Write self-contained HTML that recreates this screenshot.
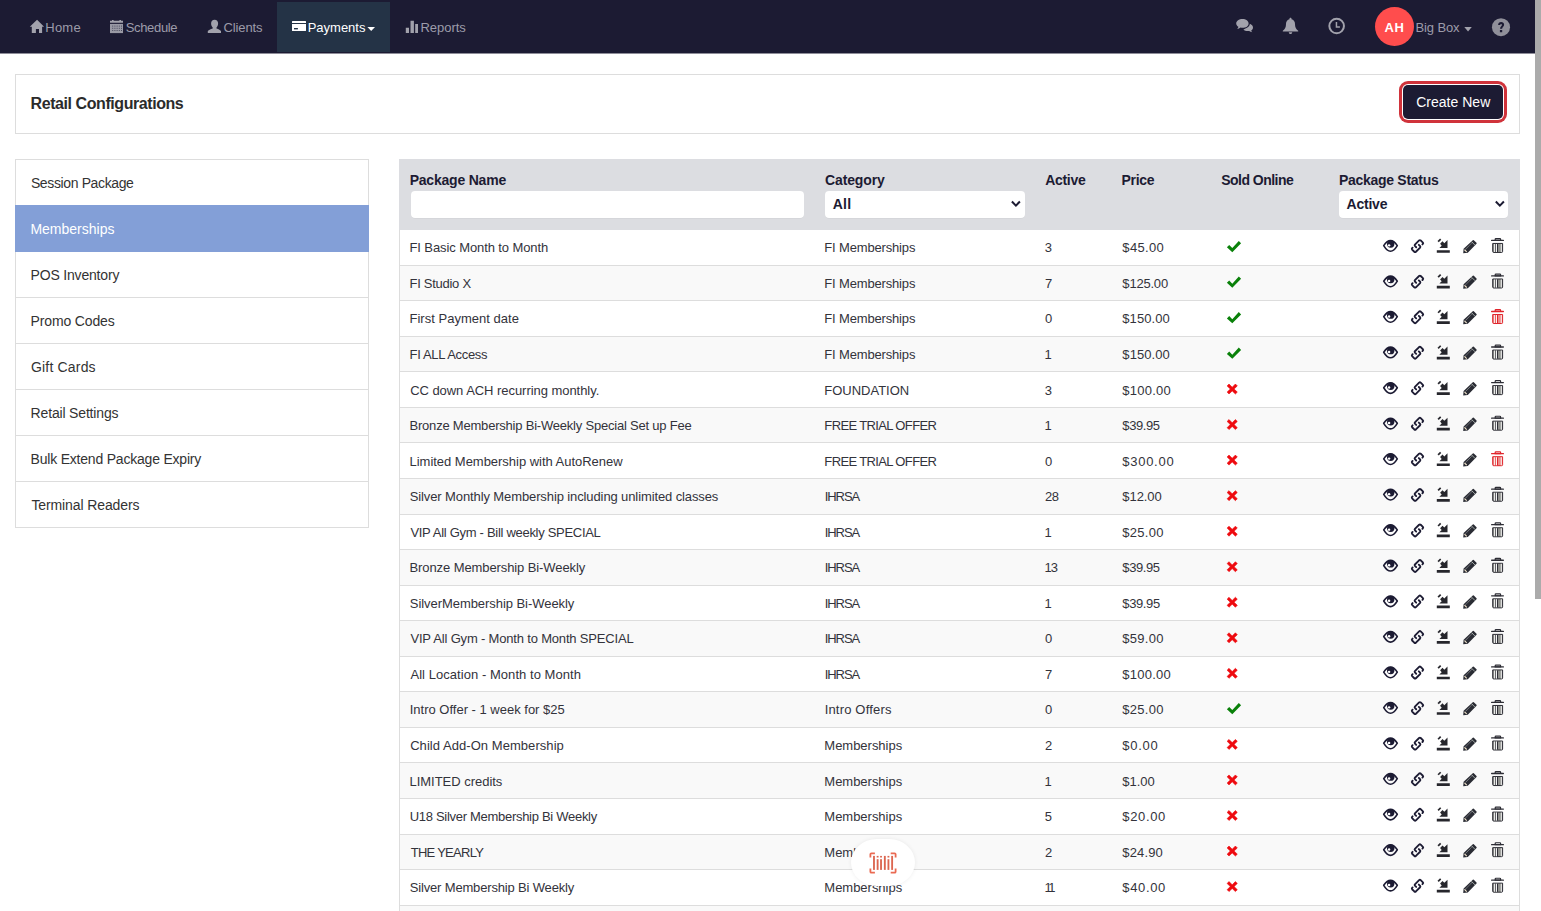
<!DOCTYPE html>
<html><head><meta charset="utf-8"><title>Retail Configurations</title>
<style>
*{box-sizing:border-box;margin:0;padding:0}
html,body{width:1541px;height:911px;overflow:hidden;background:#fff}
body{font-family:"Liberation Sans",sans-serif;font-size:13px;color:#333;position:relative}
.abs{position:absolute}
#nav{position:absolute;left:0;top:0;width:1535px;height:53px;background:#1c1b33;border-bottom:1px solid #1c1b33}
#nav2{position:absolute;left:0;top:53px;width:1535px;height:1px;background:#8e8d99}
#act{position:absolute;left:277px;top:2px;width:113px;height:50px;background:#243346}
#av{position:absolute;left:1375px;top:7px;width:39px;height:39px;border-radius:20px;background:#ff4d4d}
.t{position:absolute;height:16px;line-height:16px;white-space:nowrap}
#panel{position:absolute;left:15px;top:74px;width:1505px;height:60px;border:1px solid #ddd;background:#fff}
#cbo{position:absolute;left:1399px;top:81px;width:108px;height:42px;border-radius:9px;background:#d0333b}
#cbw{position:absolute;left:1402px;top:84px;width:102px;height:36px;border-radius:6px;background:#fff}
#cbi{position:absolute;left:1403px;top:85px;width:100px;height:34px;border-radius:5px;background:#1c1b33}
#side{position:absolute;left:15px;top:159px;width:354px;height:369px;border:1px solid #ddd;background:#fff}
.si{position:absolute;left:0;width:352px;height:46px;border-bottom:1px solid #ddd}
.si.on{background:#839fd7;border-bottom-color:#839fd7;margin-top:-1px;height:47px;left:-1px;width:354px}
#thead{position:absolute;left:399px;top:159px;width:1121px;height:71px;background:#dcdde1}
.inp{position:absolute;background:#fff;border-radius:4px;height:27px;top:191px;box-shadow:0 0.5px 0 rgba(0,0,0,0.06)}
.row{position:absolute;left:399px;width:1121px;background:#fff;border-bottom:1px solid #ddd;border-left:1px solid #ddd;border-right:1px solid #ddd}
.row.alt{background:#f9f9f9}
#ov{position:absolute;left:0;top:0;width:1541px;height:911px}
#sb{position:absolute;left:1535px;top:0;width:6px;height:911px;background:#fff}
#sb i{position:absolute;left:0;top:0;width:6px;height:599px;background:#ababab}
#fab{position:absolute;left:851px;top:839px;width:63.6px;height:47.4px;border-radius:26px / 23.7px;background:#fff;box-shadow:0 0 4px rgba(0,0,0,0.07)}

</style></head>
<body>
<div id="nav"></div><div id="nav2"></div>
<div id="act"></div>
<div id="av"></div>
<div id="panel"></div>
<div id="cbo"></div><div id="cbw"></div><div id="cbi"></div>
<div id="side">
<div class="si" style="top:0"></div>
<div class="si on" style="top:46px"></div>
<div class="si" style="top:92px"></div>
<div class="si" style="top:138px"></div>
<div class="si" style="top:184px"></div>
<div class="si" style="top:230px"></div>
<div class="si" style="top:276px"></div>
</div>
<div id="thead"></div>
<div class="inp" style="left:411px;width:393px"></div>
<div class="inp" style="left:825px;width:200px"></div>
<div class="inp" style="left:1339px;width:169px"></div>
<div id="tbl">
<div class="row" style="top:230px;height:36px"></div>
<div class="row alt" style="top:266px;height:35px"></div>
<div class="row" style="top:301px;height:36px"></div>
<div class="row alt" style="top:337px;height:35px"></div>
<div class="row" style="top:372px;height:36px"></div>
<div class="row alt" style="top:408px;height:35px"></div>
<div class="row" style="top:443px;height:36px"></div>
<div class="row alt" style="top:479px;height:36px"></div>
<div class="row" style="top:515px;height:35px"></div>
<div class="row alt" style="top:550px;height:36px"></div>
<div class="row" style="top:586px;height:35px"></div>
<div class="row alt" style="top:621px;height:36px"></div>
<div class="row" style="top:657px;height:35px"></div>
<div class="row alt" style="top:692px;height:36px"></div>
<div class="row" style="top:728px;height:35px"></div>
<div class="row alt" style="top:763px;height:36px"></div>
<div class="row" style="top:799px;height:36px"></div>
<div class="row alt" style="top:835px;height:35px"></div>
<div class="row" style="top:870px;height:36px"></div>
<div class="row alt" style="top:906px;height:36px"></div>
</div>
<span class="t" id="n1" style="left:45.37px;top:20px;font-size:13px;color:#9c9caa;letter-spacing:0.195px;">Home</span>
<span class="t" id="n2" style="left:125.65px;top:20px;font-size:13px;color:#9c9caa;letter-spacing:-0.322px;">Schedule</span>
<span class="t" id="n3" style="left:223.38px;top:20px;font-size:13px;color:#9c9caa;letter-spacing:-0.093px;">Clients</span>
<span class="t" id="n4" style="left:307.70px;top:20px;font-size:13px;color:#fff;letter-spacing:-0.008px;">Payments</span>
<span class="t" id="n5" style="left:420.53px;top:20px;font-size:13px;color:#9c9caa;letter-spacing:-0.029px;">Reports</span>
<span class="t" id="n6" style="left:1384.38px;top:20px;font-size:13px;color:#fff;font-weight:700;letter-spacing:0.619px;">AH</span>
<span class="t" id="n7" style="left:1415.55px;top:20px;font-size:13px;color:#9c9caa;letter-spacing:-0.123px;">Big Box</span>
<span class="t" id="title" style="left:30.59px;top:96px;font-size:16px;color:#2b2b2b;font-weight:700;letter-spacing:-0.430px;">Retail Configurations</span>
<span class="t" id="cbt" style="left:1416.13px;top:94px;font-size:14px;color:#fff;letter-spacing:0.022px;">Create New</span>
<span class="t" id="s0" style="left:30.91px;top:175px;font-size:14px;color:#333;letter-spacing:-0.372px;">Session Package</span>
<span class="t" id="s1" style="left:30.38px;top:221px;font-size:14px;color:#fff;letter-spacing:0.004px;">Memberships</span>
<span class="t" id="s2" style="left:30.62px;top:267px;font-size:14px;color:#333;letter-spacing:-0.189px;">POS Inventory</span>
<span class="t" id="s3" style="left:30.62px;top:313px;font-size:14px;color:#333;letter-spacing:-0.151px;">Promo Codes</span>
<span class="t" id="s4" style="left:31.02px;top:359px;font-size:14px;color:#333;letter-spacing:0.175px;">Gift Cards</span>
<span class="t" id="s5" style="left:30.62px;top:405px;font-size:14px;color:#333;letter-spacing:-0.170px;">Retail Settings</span>
<span class="t" id="s6" style="left:30.62px;top:451px;font-size:14px;color:#333;letter-spacing:-0.210px;">Bulk Extend Package Expiry</span>
<span class="t" id="s7" style="left:31.43px;top:497px;font-size:14px;color:#333;letter-spacing:-0.111px;">Terminal Readers</span>
<span class="t" id="h0" style="left:409.65px;top:172px;font-size:14px;color:#1c1b33;font-weight:700;letter-spacing:-0.209px;">Package Name</span>
<span class="t" id="h1" style="left:825.10px;top:172px;font-size:14px;color:#1c1b33;font-weight:700;letter-spacing:-0.148px;">Category</span>
<span class="t" id="h2" style="left:1045.29px;top:172px;font-size:14px;color:#1c1b33;font-weight:700;letter-spacing:-0.325px;">Active</span>
<span class="t" id="h3" style="left:1121.55px;top:172px;font-size:14px;color:#1c1b33;font-weight:700;letter-spacing:-0.289px;">Price</span>
<span class="t" id="h4" style="left:1221.31px;top:172px;font-size:14px;color:#1c1b33;font-weight:700;letter-spacing:-0.535px;">Sold Online</span>
<span class="t" id="h5" style="left:1338.88px;top:172px;font-size:14px;color:#1c1b33;font-weight:700;letter-spacing:-0.281px;">Package Status</span>
<span class="t" id="sel1" style="left:832.87px;top:196px;font-size:14px;color:#1c1b33;font-weight:700;letter-spacing:0.149px;">All</span>
<span class="t" id="sel2" style="left:1346.54px;top:196px;font-size:14px;color:#1c1b33;font-weight:700;letter-spacing:-0.214px;">Active</span>
<span class="t" id="r0a" style="left:409.52px;top:240px;font-size:13px;color:#33333b;letter-spacing:-0.103px;">FI Basic Month to Month</span>
<span class="t" id="r0b" style="left:824.35px;top:240px;font-size:13px;color:#33333b;letter-spacing:-0.164px;">FI Memberships</span>
<span class="t" id="r0c" style="left:1044.67px;top:240px;font-size:13px;color:#33333b;">3</span>
<span class="t" id="r0d" style="left:1122.32px;top:240px;font-size:13px;color:#33333b;letter-spacing:0.342px;">$45.00</span>
<span class="t" id="r1a" style="left:409.52px;top:276px;font-size:13px;color:#33333b;letter-spacing:-0.275px;">FI Studio X</span>
<span class="t" id="r1b" style="left:824.35px;top:276px;font-size:13px;color:#33333b;letter-spacing:-0.165px;">FI Memberships</span>
<span class="t" id="r1c" style="left:1044.88px;top:276px;font-size:13px;color:#33333b;">7</span>
<span class="t" id="r1d" style="left:1122.37px;top:276px;font-size:13px;color:#33333b;letter-spacing:-0.206px;">$125.00</span>
<span class="t" id="r2a" style="left:409.52px;top:311px;font-size:13px;color:#33333b;letter-spacing:0.015px;">First Payment date</span>
<span class="t" id="r2b" style="left:824.35px;top:311px;font-size:13px;color:#33333b;letter-spacing:-0.164px;">FI Memberships</span>
<span class="t" id="r2c" style="left:1044.91px;top:311px;font-size:13px;color:#33333b;">0</span>
<span class="t" id="r2d" style="left:1122.32px;top:311px;font-size:13px;color:#33333b;letter-spacing:0.074px;">$150.00</span>
<span class="t" id="r3a" style="left:409.52px;top:347px;font-size:13px;color:#33333b;letter-spacing:-0.326px;">FI ALL Access</span>
<span class="t" id="r3b" style="left:824.35px;top:347px;font-size:13px;color:#33333b;letter-spacing:-0.165px;">FI Memberships</span>
<span class="t" id="r3c" style="left:1044.38px;top:347px;font-size:13px;color:#33333b;">1</span>
<span class="t" id="r3d" style="left:1122.37px;top:347px;font-size:13px;color:#33333b;letter-spacing:0.065px;">$150.00</span>
<span class="t" id="r4a" style="left:410.17px;top:383px;font-size:13px;color:#33333b;letter-spacing:-0.048px;">CC down ACH recurring monthly.</span>
<span class="t" id="r4b" style="left:824.35px;top:383px;font-size:13px;color:#33333b;letter-spacing:-0.023px;">FOUNDATION</span>
<span class="t" id="r4c" style="left:1044.67px;top:383px;font-size:13px;color:#33333b;">3</span>
<span class="t" id="r4d" style="left:1122.32px;top:383px;font-size:13px;color:#33333b;letter-spacing:0.244px;">$100.00</span>
<span class="t" id="r5a" style="left:409.52px;top:418px;font-size:13px;color:#33333b;letter-spacing:-0.209px;">Bronze Membership Bi-Weekly Special Set up Fee</span>
<span class="t" id="r5b" style="left:824.35px;top:418px;font-size:13px;color:#33333b;letter-spacing:-0.636px;">FREE TRIAL OFFER</span>
<span class="t" id="r5c" style="left:1044.38px;top:418px;font-size:13px;color:#33333b;">1</span>
<span class="t" id="r5d" style="left:1122.37px;top:418px;font-size:13px;color:#33333b;letter-spacing:-0.404px;">$39.95</span>
<span class="t" id="r6a" style="left:409.52px;top:454px;font-size:13px;color:#33333b;letter-spacing:-0.025px;">Limited Membership with AutoRenew</span>
<span class="t" id="r6b" style="left:824.35px;top:454px;font-size:13px;color:#33333b;letter-spacing:-0.636px;">FREE TRIAL OFFER</span>
<span class="t" id="r6c" style="left:1044.91px;top:454px;font-size:13px;color:#33333b;">0</span>
<span class="t" id="r6d" style="left:1122.32px;top:454px;font-size:13px;color:#33333b;letter-spacing:0.722px;">$300.00</span>
<span class="t" id="r7a" style="left:409.74px;top:489px;font-size:13px;color:#33333b;letter-spacing:-0.109px;">Silver Monthly Membership including unlimited classes</span>
<span class="t" id="r7b" style="left:824.65px;top:489px;font-size:13px;color:#33333b;letter-spacing:-1.034px;">IHRSA</span>
<span class="t" id="r7c" style="left:1044.88px;top:489px;font-size:13px;color:#33333b;letter-spacing:-0.469px;">28</span>
<span class="t" id="r7d" style="left:1122.37px;top:489px;font-size:13px;color:#33333b;letter-spacing:-0.096px;">$12.00</span>
<span class="t" id="r8a" style="left:410.42px;top:525px;font-size:13px;color:#33333b;letter-spacing:-0.295px;">VIP All Gym - Bill weekly SPECIAL</span>
<span class="t" id="r8b" style="left:824.66px;top:525px;font-size:13px;color:#33333b;letter-spacing:-1.035px;">IHRSA</span>
<span class="t" id="r8c" style="left:1044.43px;top:525px;font-size:13px;color:#33333b;">1</span>
<span class="t" id="r8d" style="left:1122.32px;top:525px;font-size:13px;color:#33333b;letter-spacing:0.287px;">$25.00</span>
<span class="t" id="r9a" style="left:409.52px;top:560px;font-size:13px;color:#33333b;letter-spacing:-0.095px;">Bronze Membership Bi-Weekly</span>
<span class="t" id="r9b" style="left:824.65px;top:560px;font-size:13px;color:#33333b;letter-spacing:-1.034px;">IHRSA</span>
<span class="t" id="r9c" style="left:1044.38px;top:560px;font-size:13px;color:#33333b;letter-spacing:-0.848px;">13</span>
<span class="t" id="r9d" style="left:1122.37px;top:560px;font-size:13px;color:#33333b;letter-spacing:-0.404px;">$39.95</span>
<span class="t" id="r10a" style="left:409.79px;top:596px;font-size:13px;color:#33333b;letter-spacing:-0.054px;">SilverMembership Bi-Weekly</span>
<span class="t" id="r10b" style="left:824.66px;top:596px;font-size:13px;color:#33333b;letter-spacing:-1.035px;">IHRSA</span>
<span class="t" id="r10c" style="left:1044.43px;top:596px;font-size:13px;color:#33333b;">1</span>
<span class="t" id="r10d" style="left:1122.32px;top:596px;font-size:13px;color:#33333b;letter-spacing:-0.392px;">$39.95</span>
<span class="t" id="r11a" style="left:410.42px;top:631px;font-size:13px;color:#33333b;letter-spacing:-0.180px;">VIP All Gym - Month to Month SPECIAL</span>
<span class="t" id="r11b" style="left:824.65px;top:631px;font-size:13px;color:#33333b;letter-spacing:-1.034px;">IHRSA</span>
<span class="t" id="r11c" style="left:1044.91px;top:631px;font-size:13px;color:#33333b;">0</span>
<span class="t" id="r11d" style="left:1122.37px;top:631px;font-size:13px;color:#33333b;letter-spacing:0.275px;">$59.00</span>
<span class="t" id="r12a" style="left:410.43px;top:667px;font-size:13px;color:#33333b;letter-spacing:0.051px;">All Location - Month to Month</span>
<span class="t" id="r12b" style="left:824.66px;top:667px;font-size:13px;color:#33333b;letter-spacing:-1.035px;">IHRSA</span>
<span class="t" id="r12c" style="left:1044.88px;top:667px;font-size:13px;color:#33333b;">7</span>
<span class="t" id="r12d" style="left:1122.32px;top:667px;font-size:13px;color:#33333b;letter-spacing:0.244px;">$100.00</span>
<span class="t" id="r13a" style="left:409.71px;top:702px;font-size:13px;color:#33333b;letter-spacing:-0.003px;">Intro Offer - 1 week for $25</span>
<span class="t" id="r13b" style="left:824.65px;top:702px;font-size:13px;color:#33333b;letter-spacing:0.184px;">Intro Offers</span>
<span class="t" id="r13c" style="left:1044.91px;top:702px;font-size:13px;color:#33333b;">0</span>
<span class="t" id="r13d" style="left:1122.37px;top:702px;font-size:13px;color:#33333b;letter-spacing:0.275px;">$25.00</span>
<span class="t" id="r14a" style="left:410.17px;top:738px;font-size:13px;color:#33333b;letter-spacing:0.054px;">Child Add-On Membership</span>
<span class="t" id="r14b" style="left:824.35px;top:738px;font-size:13px;color:#33333b;letter-spacing:-0.024px;">Memberships</span>
<span class="t" id="r14c" style="left:1044.88px;top:738px;font-size:13px;color:#33333b;">2</span>
<span class="t" id="r14d" style="left:1122.32px;top:738px;font-size:13px;color:#33333b;letter-spacing:0.739px;">$0.00</span>
<span class="t" id="r15a" style="left:409.52px;top:774px;font-size:13px;color:#33333b;letter-spacing:-0.025px;">LIMITED credits</span>
<span class="t" id="r15b" style="left:824.35px;top:774px;font-size:13px;color:#33333b;letter-spacing:-0.024px;">Memberships</span>
<span class="t" id="r15c" style="left:1044.38px;top:774px;font-size:13px;color:#33333b;">1</span>
<span class="t" id="r15d" style="left:1122.37px;top:774px;font-size:13px;color:#33333b;letter-spacing:-0.071px;">$1.00</span>
<span class="t" id="r16a" style="left:409.65px;top:809px;font-size:13px;color:#33333b;letter-spacing:-0.290px;">U18 Silver Membership Bi Weekly</span>
<span class="t" id="r16b" style="left:824.35px;top:809px;font-size:13px;color:#33333b;letter-spacing:-0.024px;">Memberships</span>
<span class="t" id="r16c" style="left:1044.63px;top:809px;font-size:13px;color:#33333b;">5</span>
<span class="t" id="r16d" style="left:1122.32px;top:809px;font-size:13px;color:#33333b;letter-spacing:0.631px;">$20.00</span>
<span class="t" id="r17a" style="left:410.66px;top:845px;font-size:13px;color:#33333b;letter-spacing:-0.719px;">THE YEARLY</span>
<span class="t" id="r17b" style="left:824.35px;top:845px;font-size:13px;color:#33333b;letter-spacing:-0.024px;">Memberships</span>
<span class="t" id="r17c" style="left:1044.88px;top:845px;font-size:13px;color:#33333b;">2</span>
<span class="t" id="r17d" style="left:1122.37px;top:845px;font-size:13px;color:#33333b;letter-spacing:0.127px;">$24.90</span>
<span class="t" id="r18a" style="left:409.79px;top:880px;font-size:13px;color:#33333b;letter-spacing:-0.167px;">Silver Membership Bi Weekly</span>
<span class="t" id="r18b" style="left:824.35px;top:880px;font-size:13px;color:#33333b;letter-spacing:-0.024px;">Memberships</span>
<span class="t" id="r18c" style="left:1044.43px;top:880px;font-size:13px;color:#33333b;letter-spacing:-2.403px;">11</span>
<span class="t" id="r18d" style="left:1122.32px;top:880px;font-size:13px;color:#33333b;letter-spacing:0.631px;">$40.00</span>
<div id="fab"></div>
<svg id="ov" width="1541" height="911" viewBox="0 0 1541 911"><defs><g id="ok"><path d="M0 6.3 L2.3 4 L5.4 7.1 L11.9 0 L14.2 2.3 L5.4 11.2Z" fill="#0a810a"/></g><g id="rem"><path d="M0.3 2.2 L2.2 0.3 L5.4 3.5 L8.6 0.3 L10.5 2.2 L7.3 5.3 L10.5 8.4 L8.6 10.3 L5.4 7.2 L2.2 10.3 L0.3 8.4 L3.5 5.3Z" fill="#ee0a0f" stroke="#ee0a0f" stroke-width="0.6" stroke-linejoin="round"/></g><g id="eye"><path d="M0.8 5.85 Q4.2 0.8 7.6 0.8 Q11 0.8 14.4 5.85 Q11 11.45 7.6 11.45 Q4.2 11.45 0.8 5.85Z" fill="none" stroke="#1c1b33" stroke-width="1.6" stroke-linejoin="round"/><circle cx="7.8" cy="4.3" r="3.7" fill="#1c1b33"/><circle cx="6.2" cy="5.6" r="1.2" fill="#fff"/></g><g id="link"><g fill="none" stroke="#1c1b33" stroke-width="1.85" stroke-linecap="round" stroke-linejoin="round"><path d="M5.2 8.2 L3.9 6.9 Q3.3 6.2 3.9 5.6 L8.1 1.4 Q8.9 0.7 9.7 1.4 L11.9 3.6 Q12.5 4.3 11.9 4.9 L11.4 5.4"/><path d="M7.8 5.8 L9.1 7.1 Q9.7 7.8 9.1 8.5 L4.9 12.7 Q4.1 13.4 3.3 12.7 L1.1 10.5 Q0.5 9.8 1.1 9.1 L1.6 8.6"/></g></g><g id="save"><path d="M-0.1 11.2 H12.9 V13.9 H-0.1Z M10.6 1.0 L10.6 9.1 L2.5 9.1 L4.8 6.8 L3.2 4.9 L5.6 2.4 L7.4 4.2Z" fill="#26262c"/><rect x="-0.85" y="-1.8" width="1.7" height="3.6" transform="translate(2.5 1.45) rotate(45)" fill="#26262c"/></g><g id="pencil"><path d="M9.9 1.0 Q10.4 0.5 10.9 1.0 L13.6 3.7 Q14.1 4.2 13.6 4.7 L4.9 13.6 L0.3 14.1 L0.7 9.6Z" fill="#2a2c34"/><path d="M8.5 2.4 L12.2 6.1" stroke="#cfd8d0" stroke-width="0.7" fill="none"/><path d="M9.3 3.4 L2.3 10.5" stroke="#fff" stroke-width="0.6" stroke-dasharray="0.9 0.7" fill="none"/><path d="M1.6 10.6 L3.8 12.8" stroke="#f7e9cf" stroke-width="1.1" fill="none"/></g><g id="trash"><path d="M4.9 0.5 H8.9 Q9.6 0.5 9.6 1.2 V2.3 H4.2 V1.2 Q4.2 0.5 4.9 0.5Z" fill="none" stroke="#2d2d35" stroke-width="1.2"/><rect x="0" y="1.7" width="13" height="1.3" rx="0.6" fill="#2d2d35"/><path d="M1.7 5.4 H11.6 V13.4 Q11.6 14.4 10.6 14.4 H2.7 Q1.7 14.4 1.7 13.4Z" fill="#8f908c" stroke="#2d2d35" stroke-width="1"/><path d="M3.2 5.9 H4.1 V13.9 H3.2Z M5 5.9 H5.9 V13.9 H5Z M9.8 5.9 H10.7 V13.9 H9.8Z" fill="#fff"/><path d="M6 5.9 H7 V13.9 H6Z" fill="#2d2d35"/><path d="M4.15 5.9 H4.9 V13.9 H4.15Z" fill="#55555a"/></g><g id="trashr"><path d="M4.9 0.5 H8.9 Q9.6 0.5 9.6 1.2 V2.3 H4.2 V1.2 Q4.2 0.5 4.9 0.5Z" fill="none" stroke="#e0242b" stroke-width="1.2"/><rect x="0" y="1.7" width="13" height="1.3" rx="0.6" fill="#e0242b"/><path d="M1.7 5.4 H11.6 V13.4 Q11.6 14.4 10.6 14.4 H2.7 Q1.7 14.4 1.7 13.4Z" fill="#ec8a88" stroke="#e0242b" stroke-width="1"/><path d="M3.2 5.9 H4.1 V13.9 H3.2Z M5 5.9 H5.9 V13.9 H5Z M9.8 5.9 H10.7 V13.9 H9.8Z" fill="#fff"/><path d="M6 5.9 H7 V13.9 H6Z" fill="#e0242b"/><path d="M4.15 5.9 H4.9 V13.9 H4.15Z" fill="#e55a5a"/></g></defs><path d="M37.05 19.8 L29.8 26.7 H31.8 V33.1 H35.9 V29 H39 V33.1 H42.1 V26.7 H44.1Z" fill="#a2a2ac"/><path d="M110 20.8 H123 V22.8 H110Z M112 19.9 H113.6 V21 H112Z M119.4 19.9 H121 V21 H119.4Z" fill="#a2a2ac"/><path d="M110 23.9 H123 V33.1 H110Z" fill="#9999a4"/><rect x="112.2" y="25.6" width="1" height="1" fill="#4a4a5e"/><rect x="114.4" y="25.6" width="1" height="1" fill="#4a4a5e"/><rect x="116.6" y="25.6" width="1" height="1" fill="#4a4a5e"/><rect x="118.8" y="25.6" width="1" height="1" fill="#4a4a5e"/><rect x="121" y="25.6" width="1" height="1" fill="#4a4a5e"/><rect x="112.2" y="27.8" width="1" height="1" fill="#4a4a5e"/><rect x="114.4" y="27.8" width="1" height="1" fill="#4a4a5e"/><rect x="116.6" y="27.8" width="1" height="1" fill="#4a4a5e"/><rect x="118.8" y="27.8" width="1" height="1" fill="#4a4a5e"/><rect x="121" y="27.8" width="1" height="1" fill="#4a4a5e"/><rect x="112.2" y="30" width="1" height="1" fill="#4a4a5e"/><rect x="114.4" y="30" width="1" height="1" fill="#4a4a5e"/><rect x="116.6" y="30" width="1" height="1" fill="#4a4a5e"/><rect x="118.8" y="30" width="1" height="1" fill="#4a4a5e"/><rect x="121" y="30" width="1" height="1" fill="#4a4a5e"/><path d="M214.6 19.8 C216.8 19.8 218.1 21.3 218.1 23.6 C218.1 25.3 217.4 26.8 216.5 27.6 V28.4 C218.6 29.2 220.6 30 221 31 V33.1 H207.8 V31 C208.2 30 210.6 29.2 212.7 28.4 V27.6 C211.8 26.8 211.1 25.3 211.1 23.6 C211.1 21.3 212.4 19.8 214.6 19.8Z" fill="#a2a2ac"/><path d="M292.6 21 H305.4 Q306 21 306 21.6 V23 H292 V21.6 Q292 21 292.6 21Z M292 23.9 H306 V30.5 Q306 31.1 305.4 31.1 H292.6 Q292 31.1 292 30.5Z" fill="#fff"/><rect x="294" y="28" width="3.9" height="1.4" fill="#243447"/><path d="M367.4 27 H375 L371.2 31.1Z" fill="#fff"/><path d="M405.8 27.8 H409 V33 H405.8Z M410.5 20.7 H413.9 V33 H410.5Z M415.2 24.1 H418 V33 H415.2Z" fill="#a2a2ac"/><g transform="translate(1236.2 19)" fill="#a2a2ac"><path d="M6.3 0 C9.8 0 12.4 1.9 12.4 4.4 C12.4 6.9 9.8 8.8 6.3 8.8 C5.6 8.8 5 8.7 4.4 8.6 C3.4 9.5 2.2 10 0.9 10.1 C1.6 9.4 2.1 8.6 2.2 7.7 C0.9 6.9 0 5.7 0 4.4 C0 1.9 2.8 0 6.3 0Z"/><path d="M13.6 4.7 C15.5 5.4 16.8 6.8 16.8 8.4 C16.8 9.6 16.1 10.7 15 11.4 C15.1 12.1 15.5 12.7 16.1 13.2 C15 13.2 13.9 12.7 13.1 12 C12.6 12.1 12.1 12.1 11.6 12.1 C9.8 12.1 8.2 11.6 7.2 10.7 C7.6 10 10.6 9.6 12.2 7.8 C13.2 6.8 13.6 5.8 13.6 4.7Z"/></g><g transform="translate(1282.8 17.8)" fill="#a2a2ac"><path d="M7.7 0 C8.3 0 8.7 0.4 8.7 1 V1.5 C10.9 2 12.2 3.9 12.2 6.2 C12.2 9.6 13.2 11.4 15.4 12.9 V13.8 H0 V12.9 C2.2 11.4 3.2 9.6 3.2 6.2 C3.2 3.9 4.5 2 6.7 1.5 V1 C6.7 0.4 7.1 0 7.7 0Z M6 14.4 H9.4 C9.4 15.5 8.7 16.2 7.7 16.2 C6.7 16.2 6 15.5 6 14.4Z"/></g><circle cx="1336.65" cy="26" r="7.3" fill="none" stroke="#a2a2ac" stroke-width="2"/><path d="M1335.7 21.9 H1337.2 V26.2 H1339.9 V27.7 H1335.7Z" fill="#a2a2ac"/><path d="M1464.3 27 H1471.8 L1468.05 31.4Z" fill="#a2a2ac"/><circle cx="1501" cy="27.2" r="9.05" fill="#90909a"/><path d="M1498.1 25 C1498.1 23.2 1499.4 22.1 1501.1 22.1 C1502.9 22.1 1504.1 23.2 1504.1 24.7 C1504.1 26.7 1502.1 26.9 1502.1 28.7 H1500 C1500 26.4 1501.9 26.2 1501.9 24.9 C1501.9 24.4 1501.6 24.1 1501.1 24.1 C1500.5 24.1 1500.2 24.5 1500.2 25Z M1499.9 29.9 H1502.2 V32.2 H1499.9Z" fill="#1c1b33"/><path d="M1011.9 201.5 L1015.9 205.6 L1019.9 201.5" fill="none" stroke="#1c1b33" stroke-width="2"/><path d="M1495.8 201.5 L1499.85 205.6 L1503.9 201.5" fill="none" stroke="#1c1b33" stroke-width="2"/><g fill="none" stroke="#ea6a52" stroke-width="1.8" stroke-linejoin="round"><path d="M870.4 857.5 V854.3 Q870.4 853.3 871.4 853.3 H874.9 M890.7 853.3 H894.6 Q895.6 853.3 895.6 854.3 V857.5 M895.6 868.5 V871.7 Q895.6 872.7 894.6 872.7 H890.7 M874.9 872.7 H871.4 Q870.4 872.7 870.4 871.7 V868.5"/></g><g fill="#dc6650"><rect x="873.05" y="855.9" width="1.85" height="14"/><rect x="883.9" y="855.9" width="1.85" height="14"/><rect x="891.2" y="855.9" width="1.85" height="14"/><rect x="876.7" y="855.9" width="1.85" height="1.6"/><rect x="876.7" y="859.2" width="1.85" height="10.7"/><rect x="880.1" y="855.9" width="1.85" height="1.6"/><rect x="880.1" y="859.2" width="1.85" height="10.7"/><rect x="887.5" y="855.9" width="1.85" height="1.6"/><rect x="887.5" y="859.2" width="1.85" height="10.7"/></g><use href="#ok" x="1226.90" y="241.00"/><use href="#eye" x="1382.90" y="239.75"/><use href="#link" x="1411.00" y="239.05"/><use href="#save" x="1436.90" y="238.95"/><use href="#pencil" x="1462.90" y="239.15"/><use href="#trash" x="1491.00" y="238.05"/><use href="#ok" x="1226.90" y="276.54"/><use href="#eye" x="1382.90" y="275.29"/><use href="#link" x="1411.00" y="274.59"/><use href="#save" x="1436.90" y="274.49"/><use href="#pencil" x="1462.90" y="274.69"/><use href="#trash" x="1491.00" y="273.59"/><use href="#ok" x="1226.90" y="312.08"/><use href="#eye" x="1382.90" y="310.83"/><use href="#link" x="1411.00" y="310.13"/><use href="#save" x="1436.90" y="310.03"/><use href="#pencil" x="1462.90" y="310.23"/><use href="#trashr" x="1491.00" y="309.13"/><use href="#ok" x="1226.90" y="347.62"/><use href="#eye" x="1382.90" y="346.37"/><use href="#link" x="1411.00" y="345.67"/><use href="#save" x="1436.90" y="345.57"/><use href="#pencil" x="1462.90" y="345.77"/><use href="#trash" x="1491.00" y="344.67"/><use href="#rem" x="1226.80" y="383.71"/><use href="#eye" x="1382.90" y="381.91"/><use href="#link" x="1411.00" y="381.21"/><use href="#save" x="1436.90" y="381.11"/><use href="#pencil" x="1462.90" y="381.31"/><use href="#trash" x="1491.00" y="380.21"/><use href="#rem" x="1226.80" y="419.25"/><use href="#eye" x="1382.90" y="417.45"/><use href="#link" x="1411.00" y="416.75"/><use href="#save" x="1436.90" y="416.65"/><use href="#pencil" x="1462.90" y="416.85"/><use href="#trash" x="1491.00" y="415.75"/><use href="#rem" x="1226.80" y="454.79"/><use href="#eye" x="1382.90" y="452.99"/><use href="#link" x="1411.00" y="452.29"/><use href="#save" x="1436.90" y="452.19"/><use href="#pencil" x="1462.90" y="452.39"/><use href="#trashr" x="1491.00" y="451.29"/><use href="#rem" x="1226.80" y="490.33"/><use href="#eye" x="1382.90" y="488.53"/><use href="#link" x="1411.00" y="487.83"/><use href="#save" x="1436.90" y="487.73"/><use href="#pencil" x="1462.90" y="487.93"/><use href="#trash" x="1491.00" y="486.83"/><use href="#rem" x="1226.80" y="525.87"/><use href="#eye" x="1382.90" y="524.07"/><use href="#link" x="1411.00" y="523.37"/><use href="#save" x="1436.90" y="523.27"/><use href="#pencil" x="1462.90" y="523.47"/><use href="#trash" x="1491.00" y="522.37"/><use href="#rem" x="1226.80" y="561.41"/><use href="#eye" x="1382.90" y="559.61"/><use href="#link" x="1411.00" y="558.91"/><use href="#save" x="1436.90" y="558.81"/><use href="#pencil" x="1462.90" y="559.01"/><use href="#trash" x="1491.00" y="557.91"/><use href="#rem" x="1226.80" y="596.95"/><use href="#eye" x="1382.90" y="595.15"/><use href="#link" x="1411.00" y="594.45"/><use href="#save" x="1436.90" y="594.35"/><use href="#pencil" x="1462.90" y="594.55"/><use href="#trash" x="1491.00" y="593.45"/><use href="#rem" x="1226.80" y="632.49"/><use href="#eye" x="1382.90" y="630.69"/><use href="#link" x="1411.00" y="629.99"/><use href="#save" x="1436.90" y="629.89"/><use href="#pencil" x="1462.90" y="630.09"/><use href="#trash" x="1491.00" y="628.99"/><use href="#rem" x="1226.80" y="668.03"/><use href="#eye" x="1382.90" y="666.23"/><use href="#link" x="1411.00" y="665.53"/><use href="#save" x="1436.90" y="665.43"/><use href="#pencil" x="1462.90" y="665.63"/><use href="#trash" x="1491.00" y="664.53"/><use href="#ok" x="1226.90" y="703.02"/><use href="#eye" x="1382.90" y="701.77"/><use href="#link" x="1411.00" y="701.07"/><use href="#save" x="1436.90" y="700.97"/><use href="#pencil" x="1462.90" y="701.17"/><use href="#trash" x="1491.00" y="700.07"/><use href="#rem" x="1226.80" y="739.11"/><use href="#eye" x="1382.90" y="737.31"/><use href="#link" x="1411.00" y="736.61"/><use href="#save" x="1436.90" y="736.51"/><use href="#pencil" x="1462.90" y="736.71"/><use href="#trash" x="1491.00" y="735.61"/><use href="#rem" x="1226.80" y="774.65"/><use href="#eye" x="1382.90" y="772.85"/><use href="#link" x="1411.00" y="772.15"/><use href="#save" x="1436.90" y="772.05"/><use href="#pencil" x="1462.90" y="772.25"/><use href="#trash" x="1491.00" y="771.15"/><use href="#rem" x="1226.80" y="810.19"/><use href="#eye" x="1382.90" y="808.39"/><use href="#link" x="1411.00" y="807.69"/><use href="#save" x="1436.90" y="807.59"/><use href="#pencil" x="1462.90" y="807.79"/><use href="#trash" x="1491.00" y="806.69"/><use href="#rem" x="1226.80" y="845.73"/><use href="#eye" x="1382.90" y="843.93"/><use href="#link" x="1411.00" y="843.23"/><use href="#save" x="1436.90" y="843.13"/><use href="#pencil" x="1462.90" y="843.33"/><use href="#trash" x="1491.00" y="842.23"/><use href="#rem" x="1226.80" y="881.27"/><use href="#eye" x="1382.90" y="879.47"/><use href="#link" x="1411.00" y="878.77"/><use href="#save" x="1436.90" y="878.67"/><use href="#pencil" x="1462.90" y="878.87"/><use href="#trash" x="1491.00" y="877.77"/></svg>
<div id="sb"><i></i></div>
</body></html>
